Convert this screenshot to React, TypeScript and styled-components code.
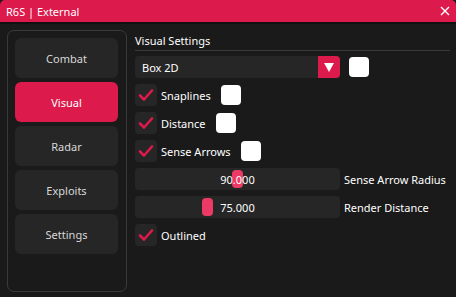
import React from "react"
import styled, { createGlobalStyle } from "styled-components"

const accent = "#dc1a4b"

const GlobalStyle = createGlobalStyle`
  html, body {
    margin: 0;
    padding: 0;
    background: #1a1a1a;
    font-family: "Noto Sans", "Open Sans", sans-serif;
    color: #ffffff;
  }
`

const Window = styled.div`
  width: 456px;
  height: 297px;
  display: flex;
  flex-direction: column;
  background: #1a1a1a;
  overflow: hidden;
`

const TitleBar = styled.div`
  height: 22px;
  background: ${accent};
  border-bottom: 2px solid #101010;
  display: flex;
  align-items: center;
  justify-content: space-between;
  padding: 0 6px;
  font-size: 11px;
  border-radius: 5px 5px 0 0;
`

const Body = styled.div`
  flex: 1;
  display: flex;
  gap: 8px;
  padding: 6px 6px 5px 7px;
`

const Sidebar = styled.div`
  width: 120px;
  box-sizing: border-box;
  border: 1px solid #3a3a3a;
  border-radius: 7px;
  padding: 7px 8px 7px 7px;
  display: flex;
  flex-direction: column;
  gap: 4px;
`

const NavButton = styled.div<{ active?: boolean }>`
  height: 40px;
  border-radius: 6px;
  background: ${(p) => (p.active ? accent : "#262626")};
  color: ${(p) => (p.active ? "#ffffff" : "#d8d8d8")};
  display: flex;
  align-items: center;
  justify-content: center;
  font-size: 11px;
`

const Content = styled.div`
  flex: 1;
  display: flex;
  flex-direction: column;
`

const Header = styled.div`
  font-size: 11px;
  line-height: 15px;
  padding: 3px 0 2px 0;
  border-bottom: 1px solid #3a3a3a;
  margin-bottom: 5px;
`

const Row = styled.div`
  display: flex;
  align-items: center;
  gap: 4px;
  height: 22px;
  margin-bottom: 6px;
  font-size: 11px;
`

const Combo = styled.div`
  width: 205px;
  height: 22px;
  background: #262626;
  border-radius: 4px;
  display: flex;
  align-items: center;
  justify-content: space-between;
  padding-left: 7px;
  box-sizing: border-box;
  overflow: hidden;
`

const ComboArrow = styled.div`
  width: 22px;
  height: 22px;
  background: ${accent};
  display: flex;
  align-items: center;
  justify-content: center;
`

const Swatch = styled.div<{ gap?: number }>`
  width: 20px;
  height: 20px;
  border-radius: 4px;
  background: #ffffff;
  margin-left: ${(p) => p.gap ?? 0}px;
`

const CheckBox = styled.div`
  width: 22px;
  height: 22px;
  border-radius: 4px;
  background: #262626;
  display: flex;
  align-items: center;
  justify-content: center;
`

const Label = styled.span`
  font-size: 11px;
  white-space: nowrap;
`

const Slider = styled.div`
  position: relative;
  width: 205px;
  flex-shrink: 0;
  height: 22px;
  background: #262626;
  border-radius: 4px;
  display: flex;
  align-items: center;
  justify-content: center;
  font-size: 11px;
`

const Grab = styled.div`
  position: absolute;
  top: 2px;
  width: 11px;
  height: 18px;
  border-radius: 4px;
  background: #ec3a66;
`

const SliderValue = styled.span`
  position: relative;
  z-index: 1;
`

function Check({ label, swatchGap }: { label: string; swatchGap?: number }) {
  return (
    <Row>
      <CheckBox>
        <svg width="16" height="14" viewBox="0 0 16 14">
          <path d="M2 7.5 L6 11.5 L14 2.5" fill="none" stroke={accent} strokeWidth="2.6" strokeLinecap="round" strokeLinejoin="round" />
        </svg>
      </CheckBox>
      <Label>{label}</Label>
      {swatchGap !== undefined && <Swatch gap={swatchGap} />}
    </Row>
  )
}

function SliderRow({ value, label, grab }: { value: string; label: string; grab: number }) {
  return (
    <Row>
      <Slider>
        <Grab style={{ left: grab }} />
        <SliderValue>{value}</SliderValue>
      </Slider>
      <Label>{label}</Label>
    </Row>
  )
}

export default function App() {
  const tabs = ["Combat", "Visual", "Radar", "Exploits", "Settings"]
  return (
    <Window>
      <GlobalStyle />
      <TitleBar>
        <span>R6S | External</span>
        <svg width="10" height="10" viewBox="0 0 10 10">
          <path d="M1 1 L9 9 M9 1 L1 9" stroke="#fff" strokeWidth="1.4" />
        </svg>
      </TitleBar>
      <Body>
        <Sidebar>
          {tabs.map((t) => (
            <NavButton key={t} active={t === "Visual"}>
              {t}
            </NavButton>
          ))}
        </Sidebar>
        <Content>
          <Header>Visual Settings</Header>
          <Row>
            <Combo>
              <span>Box 2D</span>
              <ComboArrow>
                <svg width="10" height="9" viewBox="0 0 10 9">
                  <path d="M0 0 H10 L5 9 Z" fill="#fff" />
                </svg>
              </ComboArrow>
            </Combo>
            <Swatch gap={5} />
          </Row>
          <Check label="Snaplines" swatchGap={6} />
          <Check label="Distance" swatchGap={6} />
          <Check label="Sense Arrows" swatchGap={6} />
          <SliderRow value="90.000" label="Sense Arrow Radius" grab={97} />
          <SliderRow value="75.000" label="Render Distance" grab={67} />
          <Check label="Outlined" />
        </Content>
      </Body>
    </Window>
  )
}
